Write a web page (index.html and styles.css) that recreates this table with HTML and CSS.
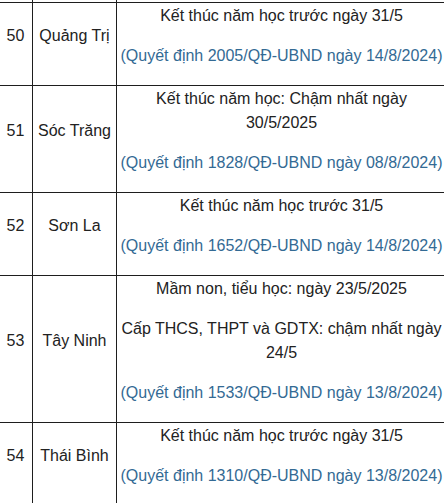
FILE: index.html
```html
<!DOCTYPE html>
<html lang="vi">
<head>
<meta charset="utf-8">
<title>Thời gian kết thúc năm học</title>
<link rel="stylesheet" href="styles.css">
</head>
<body>
<div class="table">
  <div class="cell cut"></div><div class="cell cut"></div><div class="cell cut"></div>

  <div class="cell mid"><p>50</p></div>
  <div class="cell mid"><p>Quảng Trị</p></div>
  <div class="cell wide">
    <p>Kết thúc năm học trước ngày 31/5</p>
    <p class="ref">(Quyết định 2005/QĐ-UBND ngày 14/8/2024)</p>
  </div>

  <div class="cell mid"><p>51</p></div>
  <div class="cell mid"><p>Sóc Trăng</p></div>
  <div class="cell wide">
    <p>Kết thúc năm học: Chậm nhất ngày 30/5/2025</p>
    <p class="ref">(Quyết định 1828/QĐ-UBND ngày 08/8/2024)</p>
  </div>

  <div class="cell mid"><p>52</p></div>
  <div class="cell mid"><p>Sơn La</p></div>
  <div class="cell wide">
    <p>Kết thúc năm học trước 31/5</p>
    <p class="ref">(Quyết định 1652/QĐ-UBND ngày 14/8/2024)</p>
  </div>

  <div class="cell mid"><p>53</p></div>
  <div class="cell mid"><p>Tây Ninh</p></div>
  <div class="cell wide">
    <p>Mầm non, tiểu học: ngày 23/5/2025</p>
    <p>Cấp THCS, THPT và GDTX: chậm nhất ngày 24/5</p>
    <p class="ref">(Quyết định 1533/QĐ-UBND ngày 13/8/2024)</p>
  </div>

  <div class="cell mid"><p>54</p></div>
  <div class="cell mid"><p>Thái Bình</p></div>
  <div class="cell wide">
    <p>Kết thúc năm học trước ngày 31/5</p>
    <p class="ref">(Quyết định 1310/QĐ-UBND ngày 13/8/2024)</p>
  </div>
</div>
</body>
</html>
```
FILE: styles.css
```css
html, body {
  margin: 0;
  padding: 0;
  background: #fff;
  overflow: hidden;
}

body {
  font-family: "Liberation Sans", Arial, sans-serif;
  font-size: 16px;
  line-height: 24px;
  color: #222;
}

.table {
  display: grid;
  grid-template-columns: 33px 83px 327px;
  gap: 1px;
  background: #1e1e1e;
  border-left: 1px solid #1e1e1e;
  border-right: 1px solid #1e1e1e;
  margin-left: -2px;
  width: max-content;
}

.cell {
  background: #fff;
  padding: 1px 1px 1px 3px;
  text-align: center;
}

.cell.cut {
  height: 2px;
  padding: 0;
}

.cell.mid {
  display: flex;
  flex-direction: column;
  justify-content: center;
  padding: 1px 2px;
}

.cell p {
  margin: 0 0 16px;
}

.ref {
  color: #336a94;
}
```
